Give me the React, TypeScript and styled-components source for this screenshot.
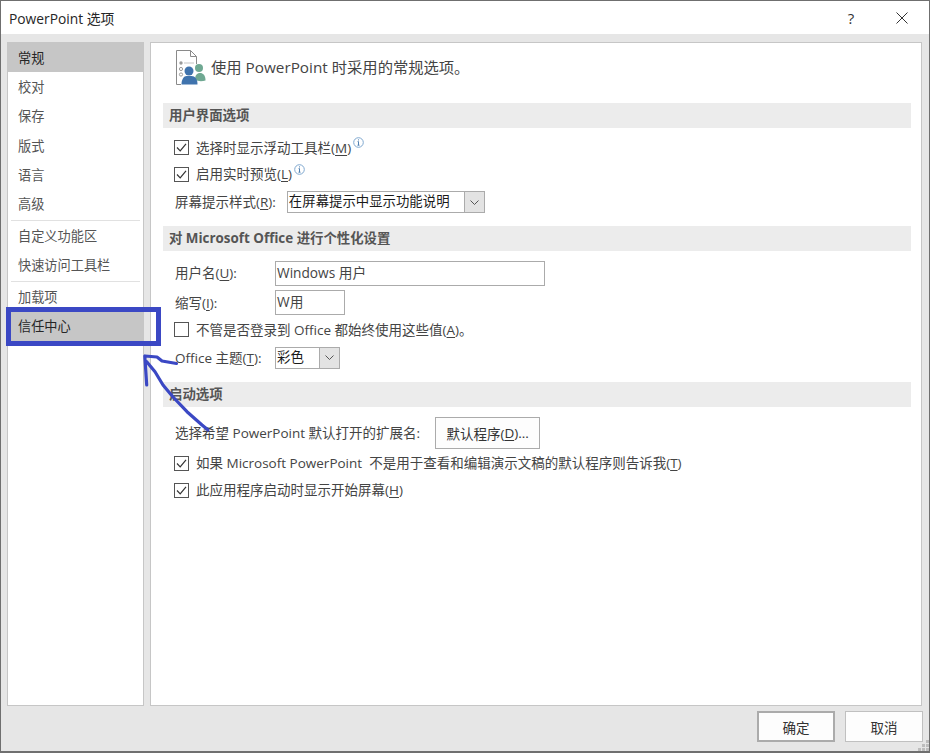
import React from 'react'
import styled, {createGlobalStyle} from 'styled-components'

const GlobalStyle = createGlobalStyle`
    html, body {
        margin: 0;
        padding: 0;
        background: #fff;
    }
    * {
        box-sizing: border-box;
    }
`

const NAV_GROUPS = [
    ['常规', '校对', '保存', '版式', '语言', '高级'],
    ['自定义功能区', '快速访问工具栏'],
    ['加载项', '信任中心'],
]

const SELECTED = ['常规', '信任中心']

const U = (props: {children: string}) => <Under>{props.children}</Under>

const OptionsIcon = () => (
    <svg width="31" height="36" viewBox="0 0 31 36">
        <path d="M1.5 0.5H15.5L21.5 6.5V14M15.5 0.5V6.5H21.5M1.5 0.5V34.5H6" fill="none" stroke="#8a8a8a" strokeWidth="1" />
        <circle cx="6" cy="13" r="1.7" fill="#9a9a9a" />
        <circle cx="6" cy="19" r="1.6" fill="none" stroke="#9a9a9a" />
        <circle cx="6" cy="24.5" r="1.6" fill="none" stroke="#9a9a9a" />
        <path d="M9 13H19" stroke="#c4c4c4" />
        <circle cx="24" cy="18" r="4" fill="#6fa892" />
        <path d="M20 30C20 25 22 23 25 23C28 23 30.5 25 30.5 30.5Q25 32 20 30Z" fill="#6fa892" />
        <circle cx="14" cy="21" r="4.5" fill="#3f73ad" />
        <path d="M6.5 34.5C6.5 29 9 26 11.5 26H16.5C20 26 22.5 29 22.5 34.5Z" fill="#3f73ad" />
    </svg>
)

const InfoIcon = () => (
    <InfoMark width="11" height="11" viewBox="0 0 11 11">
        <circle cx="5.5" cy="5.5" r="4.8" fill="none" stroke="#7fa8cf" />
        <path d="M5.5 4.6V8.2M4.5 8.2H6.5M4.6 4.6H5.5" fill="none" stroke="#4f7fb0" />
        <rect x="5" y="2.4" width="1" height="1" fill="#4f7fb0" />
    </InfoMark>
)

const Chevron = () => (
    <svg width="9" height="5" viewBox="0 0 9 5">
        <path d="M0.5 0.5L4.5 4.5L8.5 0.5" fill="none" stroke="#555" />
    </svg>
)

const Check = (props: {checked?: boolean}) => (
    <CheckBox>
        {props.checked && (
            <svg width="13" height="13" viewBox="0 0 13 13">
                <path d="M2 6.5L5.2 9.8L11 2.8" fill="none" stroke="#333" strokeWidth="1.2" />
            </svg>
        )}
    </CheckBox>
)

const Annotation = () => (
    <Overlay width="930" height="753" viewBox="0 0 930 753">
        <rect x="8.5" y="309.5" width="150" height="34" fill="none" stroke="#3b48c4" strokeWidth="5" />
        <path
            d="M145 356L157 357L162 361L176.5 363.5M144.8 356L146.7 385M146.7 361.7L155 371.7L163 385L173 397L187 411.7L202 425L208 430"
            fill="none"
            stroke="#3b48c4"
            strokeWidth="3.2"
            strokeLinecap="round"
            strokeLinejoin="round"
        />
    </Overlay>
)

export default function App() {
    return (
        <Window>
            <GlobalStyle />

            <TitleBar>
                <Title>PowerPoint 选项</Title>
                <HelpButton>?</HelpButton>
                <CloseButton>
                    <svg width="12" height="12" viewBox="0 0 12 12">
                        <path d="M0.5 0.5L11.5 11.5M11.5 0.5L0.5 11.5" stroke="#333" strokeWidth="1" />
                    </svg>
                </CloseButton>
            </TitleBar>

            <Body>
                <Nav>
                    {NAV_GROUPS.map((group, idx) => (
                        <NavGroup key={idx}>
                            {group.map(item => (
                                <NavItem key={item} $selected={SELECTED.includes(item)}>{item}</NavItem>
                            ))}
                        </NavGroup>
                    ))}
                </Nav>

                <Panel>
                    <Heading>
                        <OptionsIcon />
                        <HeadingText>使用 PowerPoint 时采用的常规选项。</HeadingText>
                    </Heading>

                    <SectionHeader>用户界面选项</SectionHeader>
                    <Rows $top={6}>
                        <Row $height={27}>
                            <Check checked />
                            <Label>选择时显示浮动工具栏(<U>M</U>)</Label>
                            <InfoIcon />
                        </Row>
                        <Row $height={26}>
                            <Check checked />
                            <Label>启用实时预览(<U>L</U>)</Label>
                            <InfoIcon />
                        </Row>
                        <Row $height={30}>
                            <PlainLabel>屏幕提示样式(<U>R</U>):</PlainLabel>
                            <Select $width={198} $gap={11}>
                                <SelectValue>在屏幕提示中显示功能说明</SelectValue>
                                <SelectArrow><Chevron /></SelectArrow>
                            </Select>
                        </Row>
                    </Rows>

                    <SectionHeader $top={9}>对 Microsoft Office 进行个性化设置</SectionHeader>
                    <Rows $top={8}>
                        <Row $height={28}>
                            <FieldLabel>用户名(<U>U</U>):</FieldLabel>
                            <TextField $width={270}>Windows 用户</TextField>
                        </Row>
                        <Row $height={31}>
                            <FieldLabel>缩写(<U>I</U>):</FieldLabel>
                            <TextField $width={70}>W用</TextField>
                        </Row>
                        <Row $height={23}>
                            <Check />
                            <Label>不管是否登录到 Office 都始终使用这些值(<U>A</U>)。</Label>
                        </Row>
                        <Row $height={33}>
                            <FieldLabel>Office 主题(<U>T</U>):</FieldLabel>
                            <Select $width={65} $gap={0}>
                                <SelectValue>彩色</SelectValue>
                                <SelectArrow><Chevron /></SelectArrow>
                            </Select>
                        </Row>
                    </Rows>

                    <SectionHeader $top={8}>启动选项</SectionHeader>
                    <Rows $top={9}>
                        <Row $height={33}>
                            <PlainLabel>选择希望 PowerPoint 默认打开的扩展名:</PlainLabel>
                            <ProgramButton>默认程序(<U>D</U>)...</ProgramButton>
                        </Row>
                        <Row $height={28}>
                            <Check checked />
                            <Label>如果 Microsoft PowerPoint&nbsp; 不是用于查看和编辑演示文稿的默认程序则告诉我(<U>T</U>)</Label>
                        </Row>
                        <Row $height={26}>
                            <Check checked />
                            <Label>此应用程序启动时显示开始屏幕(<U>H</U>)</Label>
                        </Row>
                    </Rows>
                </Panel>
            </Body>

            <Footer>
                <DialogButton $primary>确定</DialogButton>
                <DialogButton>取消</DialogButton>
                <Grip viewBox="0 0 11 11" width="11" height="11">
                    {[[8, 0], [4, 4], [8, 4], [0, 8], [4, 8], [8, 8]].map(([x, y], idx) => (
                        <rect key={idx} x={x} y={y} width="3" height="3" fill="#bdbdbd" />
                    ))}
                </Grip>
            </Footer>

            <Annotation />
        </Window>
    )
}

const FONT = `"Open Sans", "Noto Sans CJK SC", sans-serif`

const Window = styled.div`
    position: relative;
    display: flex;
    flex-direction: column;
    width: 930px;
    height: 753px;
    background-color: #e6e6e6;
    border: 1px solid #6f6f6f;
    border-bottom-width: 2px;
    font-family: ${FONT};
    font-size: 13.5px;
    color: #444;
    overflow: hidden;
`

const TitleBar = styled.div`
    display: flex;
    align-items: center;
    flex: 0 0 33px;
    padding: 0 0 0 8px;
    background-color: #fff;
`

const Title = styled.div`
    flex: 1;
    font-size: 13.8px;
    color: #262626;
`

const HelpButton = styled.div`
    width: 20px;
    text-align: center;
    margin-right: 35px;
    font-size: 15px;
    color: #333;
`

const CloseButton = styled.div`
    display: flex;
    margin-right: 21px;
`

const Body = styled.div`
    display: flex;
    gap: 6px;
    height: 664px;
    margin-top: 8px;
    padding: 0 7px 0 6px;
`

const Nav = styled.div`
    width: 137px;
    background-color: #fff;
    border: 1px solid #c6c6c6;
`

const NavGroup = styled.div`
    & + &::before {
        content: '';
        display: block;
        height: 1px;
        margin: 1px 3px 0.5px;
        background-color: #e1e1e1;
    }
`

const NavItem = styled.div<{$selected?: boolean}>`
    display: flex;
    align-items: center;
    height: 29.3px;
    padding: 0 0 1px 10px;
    font-size: 13.2px;
    background-color: ${props => props.$selected ? '#c6c6c6' : 'transparent'};
    color: ${props => props.$selected ? '#262626' : '#555'};
`

const Panel = styled.div`
    flex: 1;
    padding: 0 10px 0 12px;
    background-color: #fff;
    border: 1px solid #c6c6c6;
`

const Heading = styled.div`
    display: flex;
    align-items: flex-start;
    height: 60px;
    padding: 7px 0 0 12px;
`

const HeadingText = styled.div`
    margin-left: 5px;
    font-size: 15.3px;
    line-height: 34px;
    color: #444;
`

const SectionHeader = styled.div<{$top?: number}>`
    display: flex;
    align-items: center;
    height: 25px;
    margin-top: ${props => props.$top || 0}px;
    padding: 0 0 4px 6px;
    background-color: #ececec;
    font-weight: 700;
    font-size: 13.4px;
    color: #555;
`

const Rows = styled.div<{$top: number}>`
    display: flex;
    flex-direction: column;
    margin-top: ${props => props.$top}px;
    padding-left: 11px;
`

const Row = styled.div<{$height: number}>`
    display: flex;
    align-items: center;
    height: ${props => props.$height}px;
`

const CheckBox = styled.div`
    display: flex;
    align-items: center;
    justify-content: center;
    flex: none;
    width: 15px;
    height: 15px;
    margin-right: 7px;
    background-color: #fff;
    border: 1px solid #555;
`

const Label = styled.span`
    white-space: nowrap;
    margin-top: -2px;
`

const PlainLabel = styled.span`
    white-space: nowrap;
    margin: -2px 0 0 1px;
`

const FieldLabel = styled.span`
    flex: 0 0 100px;
    margin: -2px 0 0 1px;
    white-space: nowrap;
`

const Under = styled.span`
    text-decoration: underline;
    text-underline-offset: 2px;
`

const InfoMark = styled.svg`
    align-self: flex-start;
    margin: 3px 0 0 2px;
`

const Select = styled.div<{$width: number, $gap: number}>`
    display: flex;
    align-items: stretch;
    width: ${props => props.$width}px;
    height: 22px;
    margin-left: ${props => props.$gap}px;
    border: 1px solid #ababab;
    background-color: #fff;
`

const SelectValue = styled.div`
    flex: 1;
    padding-left: 1px;
    font-size: 13.4px;
    line-height: 19px;
    color: #1a1a1a;
    white-space: nowrap;
`

const SelectArrow = styled.div`
    display: flex;
    align-items: center;
    justify-content: center;
    width: 20px;
    background-color: #e3e3e3;
    border-left: 1px solid #ababab;
`

const TextField = styled.div<{$width: number}>`
    display: flex;
    align-items: center;
    width: ${props => props.$width}px;
    height: 25px;
    padding: 0 0 3px 1px;
    border: 1px solid #ababab;
    background-color: #fff;
    font-size: 13.7px;
`

const ProgramButton = styled.div`
    display: flex;
    align-items: center;
    justify-content: center;
    width: 105px;
    height: 32px;
    margin-left: 15px;
    background-color: #fdfdfd;
    border: 1px solid #ababab;
    color: #333;
`

const Footer = styled.div`
    position: relative;
    display: flex;
    justify-content: flex-end;
    align-items: flex-start;
    gap: 10px;
    padding: 5px 6px 0 0;
    flex: 1;
`

const DialogButton = styled.div<{$primary?: boolean}>`
    display: flex;
    align-items: center;
    justify-content: center;
    width: 78px;
    height: 31px;
    background-color: #fdfdfd;
    border: ${props => props.$primary ? '2px solid #ababab' : '1px solid #c0c0c0'};
    color: #333;
`

const Grip = styled.svg`
    position: absolute;
    right: 0;
    bottom: 0;
`

const Overlay = styled.svg`
    position: absolute;
    left: -1px;
    top: -1px;
    pointer-events: none;
`
